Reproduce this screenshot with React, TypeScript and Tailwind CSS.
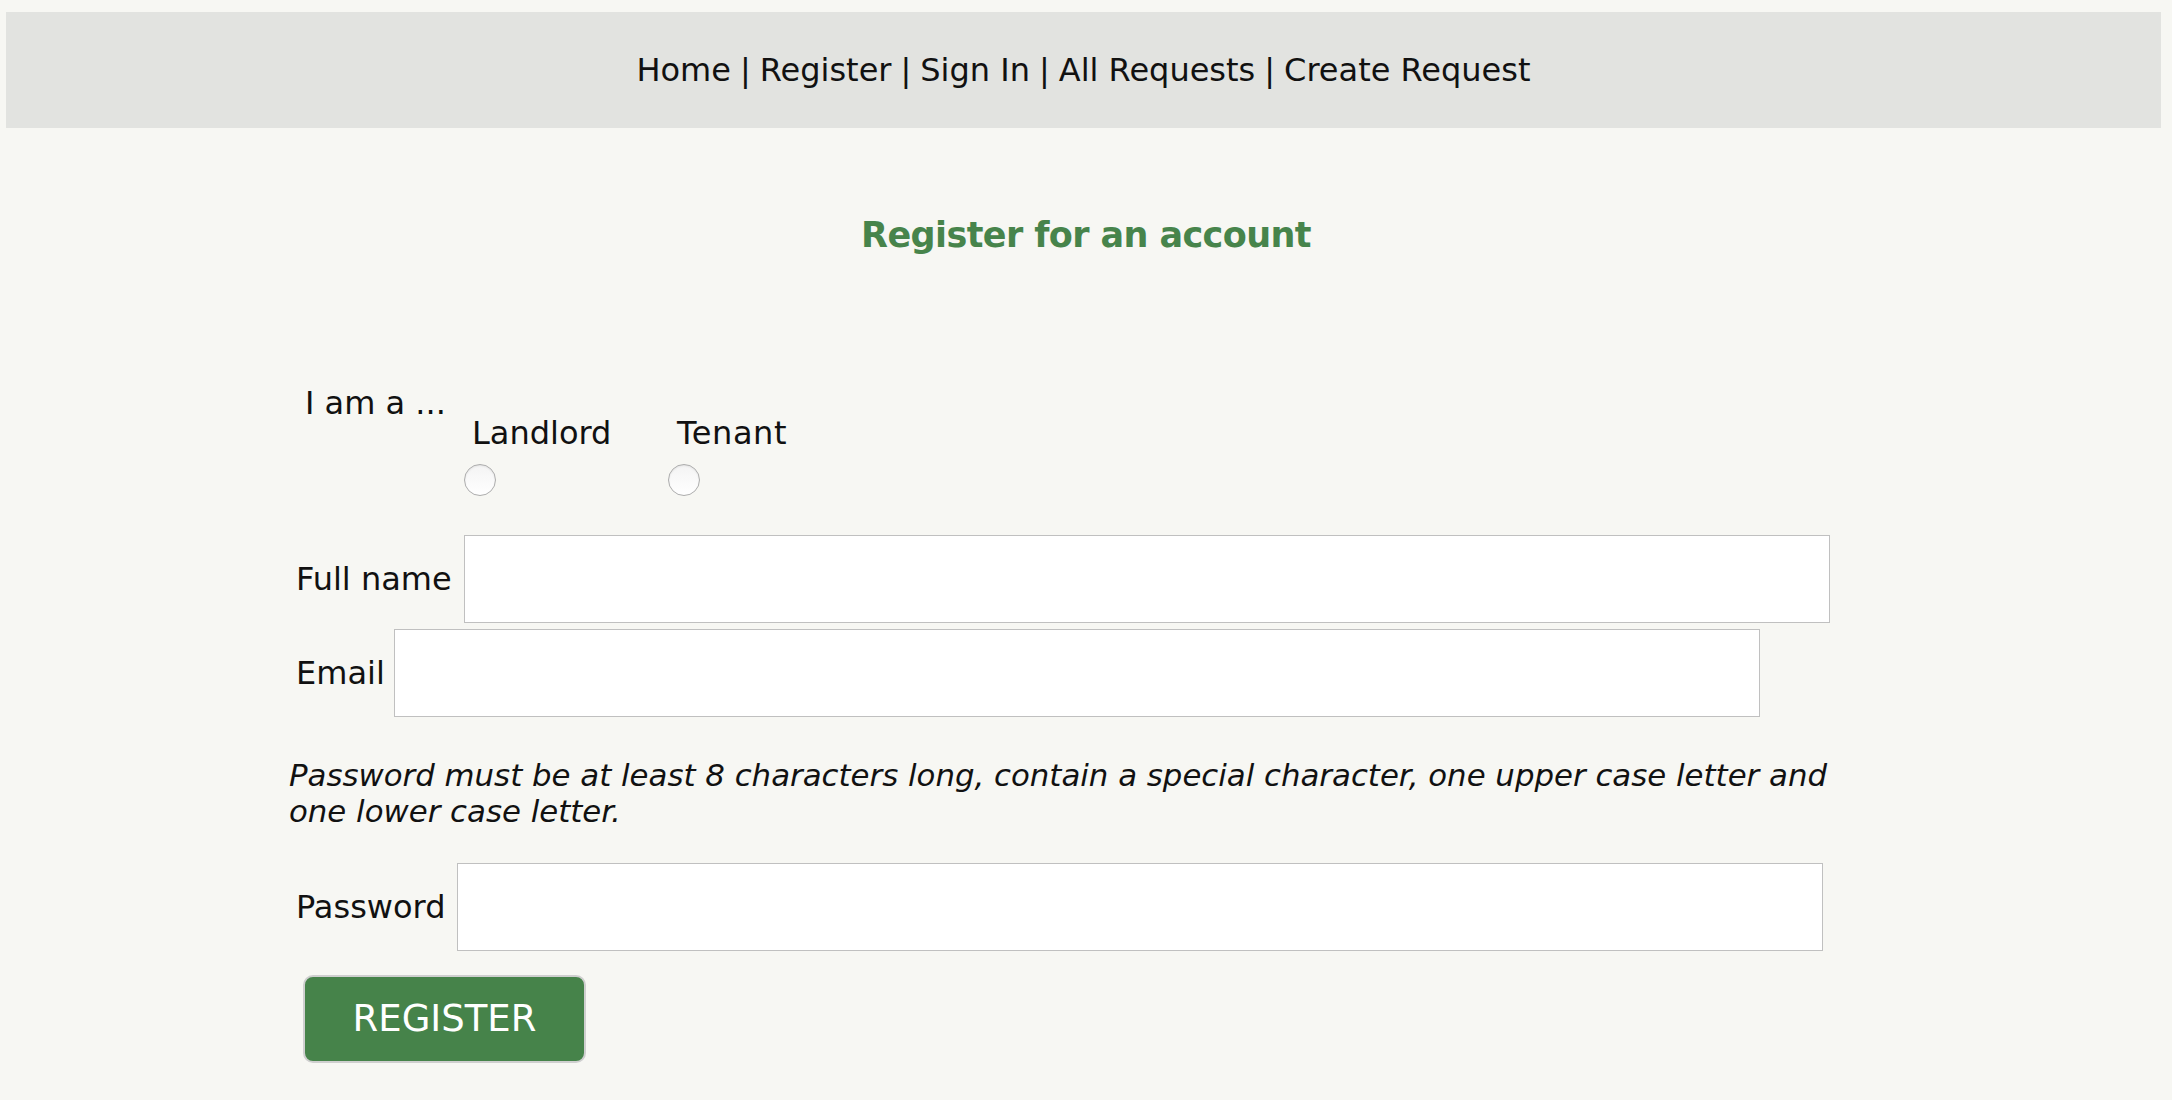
export default function App() {
  const sep = <span className="mx-[9px]">|</span>;
  return (
    <div className="min-h-[1100px] w-full overflow-hidden bg-[#f7f7f3] pt-[12px] text-[#111] font-['DejaVu_Sans',sans-serif]">
      <nav className="ml-[6px] mr-[11px] flex h-[116px] items-center justify-center bg-[#e2e3e0] text-[32px] leading-[36px]">
        <a>Home</a>
        {sep}
        <a>Register</a>
        {sep}
        <a>Sign In</a>
        {sep}
        <a>All Requests</a>
        {sep}
        <a>Create Request</a>
      </nav>

      <h1 className="mt-[87px] text-center text-[35px] font-bold leading-[40px] tracking-[-0.6px] text-[#47844b]">
        Register for an account
      </h1>

      <form className="ml-[291px] w-[1560px]">
        <div className="mt-[130px] flex items-start">
          <span className="ml-[14px] w-[159px] text-[32px] leading-[36px]">I am a ...</span>
          <div className="mt-[30px] flex w-[204px] flex-col">
            <span className="pl-[8px] text-[32px] leading-[36px]">Landlord</span>
            <span className="mt-[13px] h-[32px] w-[32px] rounded-full border border-[#adadad] bg-gradient-to-b from-[#f4f4f4] to-white shadow-[inset_0_1px_2px_rgba(0,0,0,0.08)]" />
          </div>
          <div className="mt-[30px] flex w-[204px] flex-col">
            <span className="pl-[9px] text-[32px] leading-[36px] tracking-[0.6px]">Tenant</span>
            <span className="mt-[13px] h-[32px] w-[32px] rounded-full border border-[#adadad] bg-gradient-to-b from-[#f4f4f4] to-white shadow-[inset_0_1px_2px_rgba(0,0,0,0.08)]" />
          </div>
        </div>

        <div className="mt-[39px] ml-[5px] flex items-center gap-[12px]">
          <label className="text-[32px] leading-[36px]">Full name</label>
          <input className="h-[88px] w-[1366px] border border-[#c0c0c0] bg-white outline-none" />
        </div>

        <div className="mt-[6px] ml-[5px] flex items-center gap-[9px]">
          <label className="text-[32px] leading-[36px]">Email</label>
          <input className="h-[88px] w-[1366px] border border-[#c0c0c0] bg-white outline-none" />
        </div>

        <p className="mt-[40px] -ml-[2px] text-[30.8px] italic leading-[36px]">
          Password must be at least 8 characters long, contain a special character, one upper case letter and one lower case letter.
        </p>

        <div className="mt-[34px] ml-[5px] flex items-center gap-[12px]">
          <label className="text-[32px] leading-[36px]">Password</label>
          <input type="password" className="h-[88px] w-[1366px] border border-[#c0c0c0] bg-white outline-none" />
        </div>

        <button
          type="button"
          className="mt-[24px] ml-[12px] flex h-[88px] w-[283px] items-center justify-center rounded-[10px] border-2 border-[#cfcfcf] bg-[#46834a] text-[37px] leading-[40px] text-white"
        >
          REGISTER
        </button>
      </form>
    </div>
  );
}
